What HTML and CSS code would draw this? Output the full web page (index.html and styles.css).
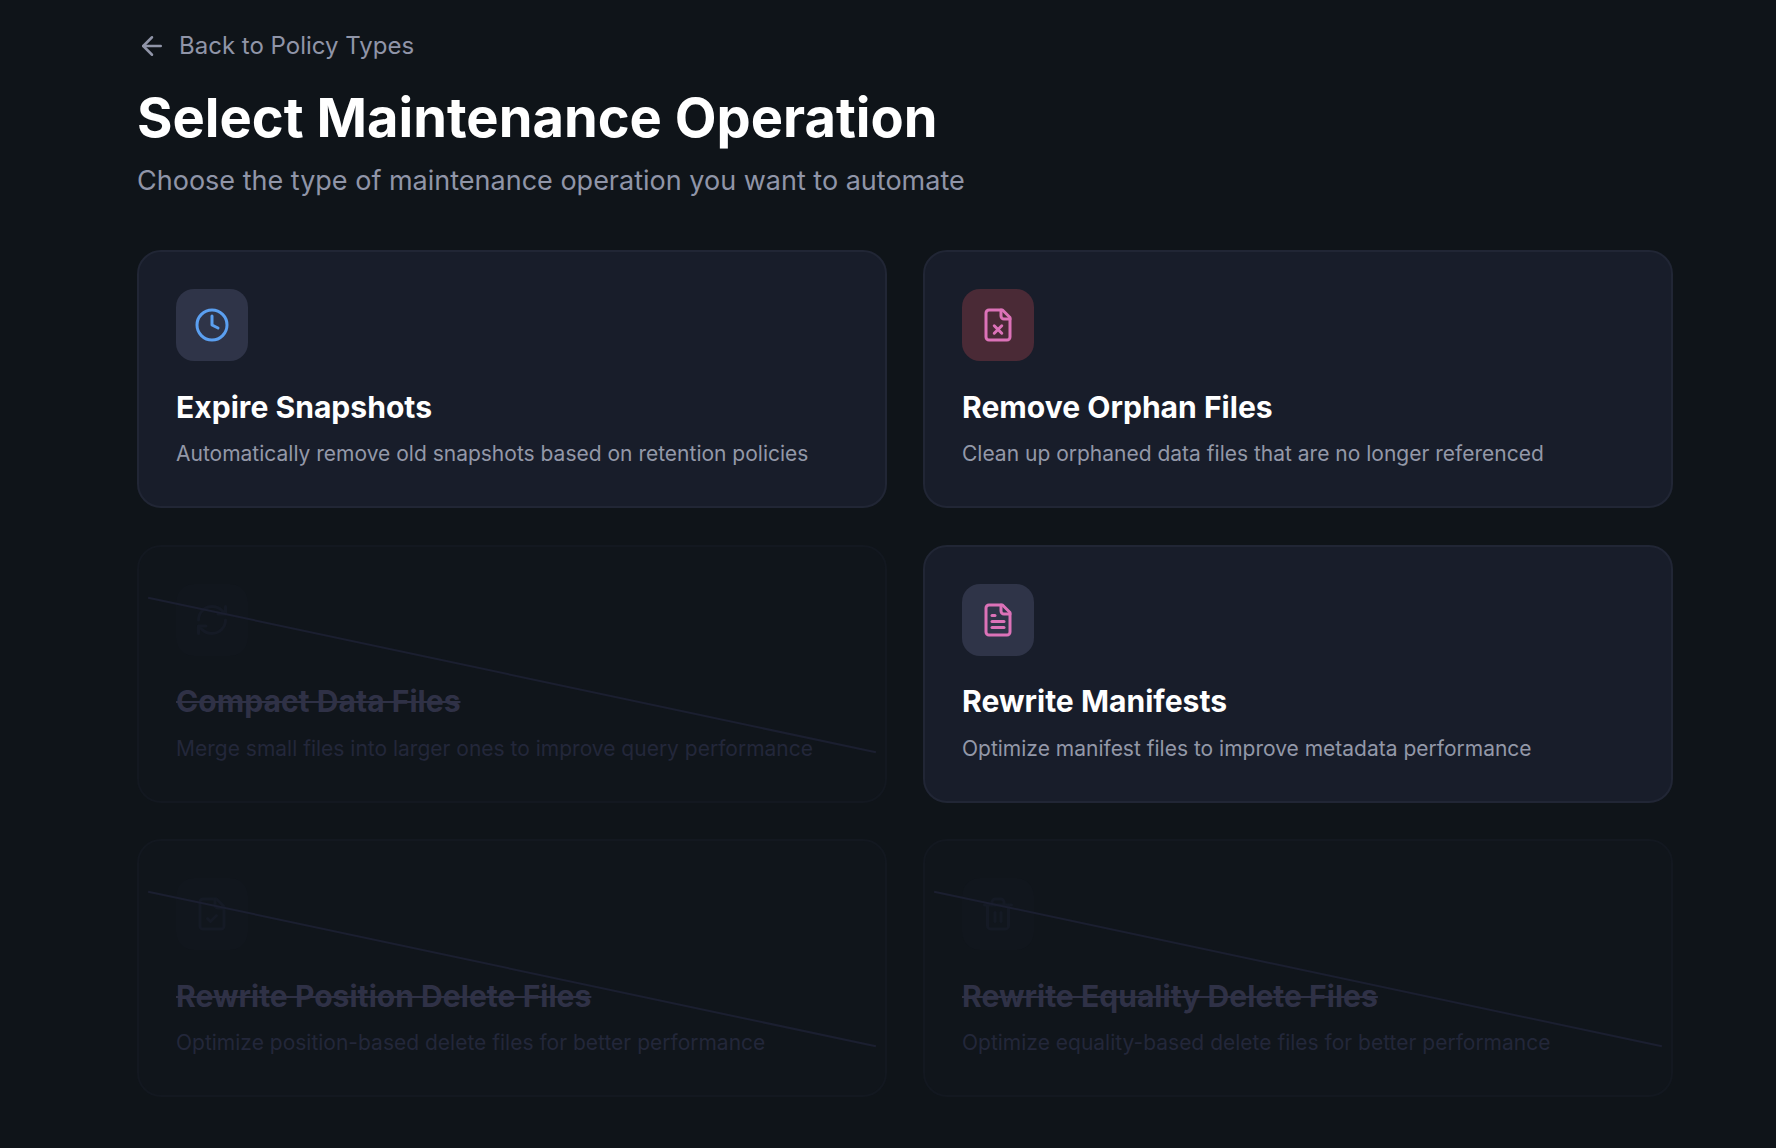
FILE: index.html
```html
<!DOCTYPE html>
<html lang="en">
    <head>
        <meta charset="UTF-8" />
        <meta name="viewport" content="width=device-width, initial-scale=1.0" />
        <title>Select Maintenance Operation</title>
        <link rel="stylesheet" href="styles.css">
    </head>
    <body>
        <main class="page">
            <a class="back-link" href="#">
                <svg class="back-icon" viewBox="0 0 24 24" fill="none" stroke="currentColor" stroke-width="2" stroke-linecap="round" stroke-linejoin="round">
                    <path d="m12 19-7-7 7-7" />
                    <path d="M19 12H5" />
                </svg>
                <span>Back to Policy Types</span>
            </a>
            <h1>Select Maintenance Operation</h1>
            <p class="subtitle">Choose the type of maintenance operation you want to automate</p>

            <div class="grid-container">
                <div class="card">
                    <div class="icon-box">
                        <svg class="icon icon-blue" viewBox="0 0 24 24" fill="none" stroke="currentColor" stroke-width="2" stroke-linecap="round" stroke-linejoin="round">
                            <circle cx="12" cy="12" r="10" />
                            <path d="M12 6v6l4 2" />
                        </svg>
                    </div>
                    <h3>Expire Snapshots</h3>
                    <p>Automatically remove old snapshots based on retention policies</p>
                </div>

                <div class="card">
                    <div class="icon-box icon-box-red">
                        <svg class="icon icon-pink" viewBox="0 0 24 24" fill="none" stroke="currentColor" stroke-width="2" stroke-linecap="round" stroke-linejoin="round">
                            <path d="M15 2H6a2 2 0 0 0-2 2v16a2 2 0 0 0 2 2h12a2 2 0 0 0 2-2V7Z" />
                            <path d="M14 2v4a2 2 0 0 0 2 2h4" />
                            <path d="m14.5 12.5-5 5" />
                            <path d="m9.5 12.5 5 5" />
                        </svg>
                    </div>
                    <h3>Remove Orphan Files</h3>
                    <p>Clean up orphaned data files that are no longer referenced</p>
                </div>

                <div class="card disabled">
                    <div class="icon-box">
                        <svg class="icon" viewBox="0 0 24 24" fill="none" stroke="currentColor" stroke-width="2" stroke-linecap="round" stroke-linejoin="round">
                            <path d="M3 12a9 9 0 0 1 9-9 9.75 9.75 0 0 1 6.74 2.74L21 8" />
                            <path d="M21 3v5h-5" />
                            <path d="M21 12a9 9 0 0 1-9 9 9.75 9.75 0 0 1-6.74-2.74L3 16" />
                            <path d="M8 16H3v5" />
                        </svg>
                    </div>
                    <h3>Compact Data Files</h3>
                    <p>Merge small files into larger ones to improve query performance</p>
                </div>

                <div class="card">
                    <div class="icon-box">
                        <svg class="icon icon-pink" viewBox="0 0 24 24" fill="none" stroke="currentColor" stroke-width="2" stroke-linecap="round" stroke-linejoin="round">
                            <path d="M15 2H6a2 2 0 0 0-2 2v16a2 2 0 0 0 2 2h12a2 2 0 0 0 2-2V7Z" />
                            <path d="M14 2v4a2 2 0 0 0 2 2h4" />
                            <path d="M10 9H8" />
                            <path d="M16 13H8" />
                            <path d="M16 17H8" />
                        </svg>
                    </div>
                    <h3>Rewrite Manifests</h3>
                    <p>Optimize manifest files to improve metadata performance</p>
                </div>

                <div class="card disabled">
                    <div class="icon-box">
                        <svg class="icon" viewBox="0 0 24 24" fill="none" stroke="currentColor" stroke-width="2" stroke-linecap="round" stroke-linejoin="round">
                            <path d="M15 2H6a2 2 0 0 0-2 2v16a2 2 0 0 0 2 2h12a2 2 0 0 0 2-2V7Z" />
                            <path d="M14 2v4a2 2 0 0 0 2 2h4" />
                            <path d="m9 15 2 2 4-4" />
                        </svg>
                    </div>
                    <h3>Rewrite Position Delete Files</h3>
                    <p>Optimize position-based delete files for better performance</p>
                </div>

                <div class="card disabled">
                    <div class="icon-box">
                        <svg class="icon" viewBox="0 0 24 24" fill="none" stroke="currentColor" stroke-width="2" stroke-linecap="round" stroke-linejoin="round">
                            <path d="M3 6h18" />
                            <path d="M19 6v14c0 1-1 2-2 2H7c-1 0-2-1-2-2V6" />
                            <path d="M8 6V4c0-1 1-2 2-2h4c1 0 2 1 2 2v2" />
                            <path d="M10 11v6" />
                            <path d="M14 11v6" />
                        </svg>
                    </div>
                    <h3>Rewrite Equality Delete Files</h3>
                    <p>Optimize equality-based delete files for better performance</p>
                </div>
            </div>
        </main>
    </body>
</html>
```

FILE: styles.css
```css
* {
    box-sizing: border-box;
}

body {
    margin: 0;
    background-color: #0f1419;
    font-family: Inter, "Liberation Sans", sans-serif;
}

.page {
    padding: 28px 103px 0 137px;
}

.back-link {
    display: flex;
    align-items: center;
    gap: 12px;
    height: 36px;
    color: #9095a8;
    font-size: 24px;
    line-height: 36px;
    text-decoration: none;
}

.back-icon {
    width: 30px;
    height: 30px;
}

h1 {
    margin: 22px 0 0;
    color: #ffffff;
    font-size: 54.25px;
    font-weight: 700;
    line-height: 63px;
}

.subtitle {
    margin: 14px 0 0;
    color: #9095a8;
    font-size: 27px;
    line-height: 36px;
}

.grid-container {
    display: grid;
    grid-template-columns: 1fr 1fr;
    gap: 36.5px 36px;
    margin-top: 51px;
}

.card {
    position: relative;
    height: 258px;
    padding: 37px;
    border: 2px solid #212635;
    border-radius: 24px;
    background-color: #181d2a;
}

.icon-box {
    display: flex;
    align-items: center;
    justify-content: center;
    width: 72px;
    height: 72px;
    border-radius: 18px;
    background-color: #2f3448;
}

.icon-box-red {
    background-color: #4a2a36;
}

.icon {
    width: 36px;
    height: 36px;
}

.icon-blue {
    color: #5b9ff0;
}

.icon-pink {
    color: #dc72b8;
}

.card h3 {
    margin: 27.5px 0 0;
    color: #ffffff;
    font-size: 30.1px;
    font-weight: 700;
    line-height: 36px;
}

.card p {
    margin: 14.5px 0 0;
    color: #9398a8;
    font-size: 21px;
    line-height: 29px;
}

/* Not available yet: faded, crossed out */
.card.disabled {
    border-color: #131820;
    background-color: #10151b;
}

.card.disabled .icon-box {
    background-color: #11161d;
}

.card.disabled .icon {
    color: #151a25;
}

.card.disabled h3 {
    color: #2f3146;
    text-decoration: line-through;
    text-decoration-thickness: 2px;
}

.card.disabled p {
    color: #23273a;
}

.card.disabled::after {
    content: "";
    position: absolute;
    top: 50%;
    left: 1px;
    right: 1px;
    height: 2px;
    background-color: #1b1f30;
    transform: rotate(12deg);
}
```
